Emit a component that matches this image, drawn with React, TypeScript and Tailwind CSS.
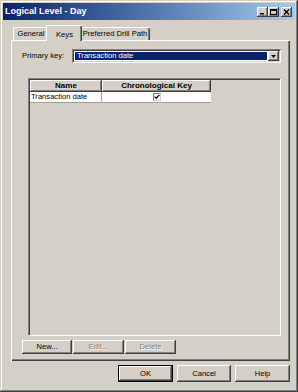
import React from 'react';

const raised =
  'shadow-[inset_-1px_-1px_#404040,inset_1px_1px_#ffffff,inset_-2px_-2px_#808080,inset_2px_2px_#d4d0c8]';
const sunken =
  'shadow-[inset_1px_1px_#808080,inset_-1px_-1px_#ffffff,inset_2px_2px_#404040,inset_-2px_-2px_#d4d0c8]';

const TitleButton: React.FC<{ kind: 'min' | 'max' | 'close' }> = ({ kind }) => (
  <div className={`w-[11px] h-[10px] bg-[#d4d0c8] flex items-center justify-center ${raised}`}>
    <svg width="7" height="6" viewBox="0 0 7 6">
      {kind === 'min' && <rect x="1" y="4" width="4" height="1.5" fill="#000" />}
      {kind === 'max' && (
        <>
          <rect x="0.5" y="0.5" width="6" height="5" fill="none" stroke="#000" strokeWidth="1" />
          <rect x="0.5" y="0.5" width="6" height="1.4" fill="#000" />
        </>
      )}
      {kind === 'close' && (
        <path d="M1 0.5 L6 5.5 M6 0.5 L1 5.5" stroke="#000" strokeWidth="1.4" />
      )}
    </svg>
  </div>
);

const PushButton: React.FC<{ label: string; disabled?: boolean; w: string; h: string; isDefault?: boolean }> = ({
  label,
  disabled,
  w,
  h,
  isDefault,
}) => (
  <div className={`${w} ${h} ${isDefault ? 'border border-black' : ''}`}>
    <div
      className={`w-full h-full bg-[#d4d0c8] flex items-center justify-center ${raised} ${
        disabled ? 'text-[#808080] [text-shadow:1px_1px_0_#ffffff]' : 'text-black'
      }`}
    >
      {label}
    </div>
  </div>
);

export default function App() {
  return (
    <div className="w-[298px] h-[392px] bg-[#d4d0c8] font-['Liberation_Sans',Arial,sans-serif] text-[7.6px] text-black overflow-hidden">
      <div
        className={`w-full h-full p-[3px] flex flex-col shadow-[inset_-1px_-1px_#404040,inset_1px_1px_#d4d0c8,inset_-2px_-2px_#808080,inset_2px_2px_#ffffff]`}
      >
        {/* Title bar */}
        <div className="h-[17px] shrink-0 flex items-center justify-between pl-[2px] pr-[3px] bg-gradient-to-r from-[#0a246a] to-[#a6caf0]">
          <span className="text-white font-bold text-[9px] leading-none">Logical Level - Day</span>
          <div className="flex items-center">
            <TitleButton kind="min" />
            <TitleButton kind="max" />
            <div className="w-[2px]" />
            <TitleButton kind="close" />
          </div>
        </div>

        <div className="flex flex-col pl-[8px] pr-[5px]">
          {/* Tabs */}
          <div className="mt-[5px] h-[15px] flex items-end pl-[2px]">
            <div className="h-[13px] w-[35px] bg-[#d4d0c8] flex items-center justify-center border-t border-l border-white shadow-[inset_-1px_0_#404040] rounded-tl-[2px]">
              General
            </div>
            <div className="relative z-10 h-[16px] -mb-[1px] w-[36px] -mx-[2px] bg-[#d4d0c8] flex items-start justify-center pt-[3px] border-t border-l border-white shadow-[inset_-1px_0_#404040,inset_-2px_0_#808080] rounded-tl-[2px]">
              Keys
            </div>
            <div className="h-[13px] w-[70px] bg-[#d4d0c8] flex items-center justify-center border-t border-white shadow-[inset_-1px_0_#404040,inset_-2px_0_#808080] rounded-tr-[2px]">
              Preferred Drill Path
            </div>
          </div>

          {/* Tab panel */}
          <div className="h-[321px] flex flex-col border-t border-l border-white shadow-[inset_-1px_-1px_#404040,inset_-2px_-2px_#808080] pl-[10px] pr-[9px]">
            <div className="mt-[8px] h-[14px] flex items-center">
              <span className="w-[50px] shrink-0">Primary key:</span>
              <div className={`flex-1 h-full bg-white p-[2px] flex items-stretch ${sunken}`}>
                <div className="flex-1 ml-[1px] my-[1px] bg-[#0a246a] text-white flex items-center pl-[2px]">
                  Transaction date
                </div>
                <div className={`w-[11px] ml-[1px] bg-[#d4d0c8] flex items-center justify-center ${raised}`}>
                  <svg width="5" height="3" viewBox="0 0 5 3">
                    <path d="M0 0 H5 L2.5 3 Z" fill="#000" />
                  </svg>
                </div>
              </div>
            </div>

            {/* List view */}
            <div className="mt-[15px] ml-[6px] h-[258px] border-t border-l border-[#808080] border-r border-b border-r-white border-b-white">
              <div className="w-full h-full border-t border-l border-[#404040] flex flex-col">
                <div className="flex h-[12px] font-bold text-[8px]">
                  <div className={`w-[72px] bg-[#d4d0c8] flex items-center justify-center ${raised}`}>Name</div>
                  <div className={`w-[109px] bg-[#d4d0c8] flex items-center justify-center ${raised}`}>
                    Chronological Key
                  </div>
                </div>
                <div className="flex h-[11px]">
                  <div className="w-[72px] bg-white flex items-center pl-[1px] border-r border-b border-[#a0a0a0]">
                    Transaction date
                  </div>
                  <div className="w-[109px] bg-white flex items-center justify-center border-b border-[#a0a0a0]">
                    <div className="w-[8px] h-[8px] bg-white border-t border-l border-[#808080] border-r border-b border-r-[#d4d0c8] border-b-[#d4d0c8] flex items-center justify-center">
                      <svg width="6" height="6" viewBox="0 0 6 6">
                        <path d="M0.6 2.6 L2.2 4.3 L5.4 0.9" fill="none" stroke="#000" strokeWidth="1.3" />
                      </svg>
                    </div>
                  </div>
                </div>
              </div>
            </div>

            {/* List buttons */}
            <div className="mt-[4px] flex gap-[1px]">
              <PushButton label="New..." w="w-[50px]" h="h-[14px]" />
              <PushButton label="Edit..." w="w-[51px]" h="h-[14px]" disabled />
              <PushButton label="Delete" w="w-[51px]" h="h-[14px]" disabled />
            </div>
          </div>

          {/* Dialog buttons */}
          <div className="mt-[4px] flex justify-end gap-[4px]">
            <PushButton label="OK" w="w-[55px]" h="h-[17px]" isDefault />
            <PushButton label="Cancel" w="w-[54px]" h="h-[17px]" />
            <PushButton label="Help" w="w-[55px]" h="h-[17px]" />
          </div>
        </div>
      </div>
    </div>
  );
}
